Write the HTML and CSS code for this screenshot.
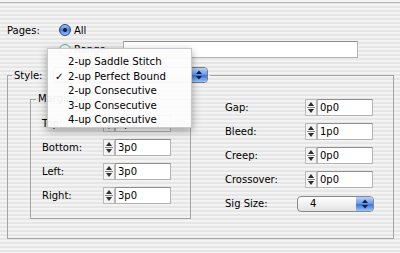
FILE: index.html
```html
<!DOCTYPE html>
<html lang="en">
<head>
    <meta charset="UTF-8">
    <title>Booklet Setup</title>
    <link rel="stylesheet" href="styles.css">
</head>
<body>

    <div class="dialog">

        <!-- Pages -->
        <div class="pages-row">
            <span class="pages-label">Pages:</span>
            <label class="radio">
                <svg class="radio-icon" width="12" height="12" viewBox="0 0 12 12">
                    <defs>
                        <linearGradient id="blueRadio" x1="0" y1="0" x2="0" y2="1">
                            <stop offset="0" stop-color="#a9c8f2"/>
                            <stop offset="0.5" stop-color="#4b82da"/>
                            <stop offset="1" stop-color="#9cc3f5"/>
                        </linearGradient>
                    </defs>
                    <circle cx="6" cy="6" r="5.5" fill="url(#blueRadio)" stroke="#27479a"/>
                    <circle cx="6" cy="6" r="2" fill="#0c1a3d"/>
                </svg>
                All
            </label>
        </div>

        <div class="range-row">
            <label class="radio range-radio">
                <svg class="radio-icon" width="12" height="12" viewBox="0 0 12 12">
                    <defs>
                        <linearGradient id="greyRadio" x1="0" y1="0" x2="0" y2="1">
                            <stop offset="0" stop-color="#e2f4ee"/>
                            <stop offset="1" stop-color="#ffffff"/>
                        </linearGradient>
                    </defs>
                    <circle cx="6" cy="6" r="5.5" fill="url(#greyRadio)" stroke="#5fa58f"/>
                </svg>
                Range:
            </label>
            <span class="field range-field"></span>
        </div>

        <!-- Style group -->
        <fieldset class="style-group">
            <legend class="style-legend">
                <span>Style:</span>
                <span class="style-popup">
                    <span class="popup-arrows">
                        <svg width="8" height="12" viewBox="0 0 8 12">
                            <polygon points="4,1.5 7,5 1,5" fill="#0d1f4a"/>
                            <polygon points="1,7 7,7 4,10.5" fill="#0d1f4a"/>
                        </svg>
                    </span>
                </span>
            </legend>

            <div class="style-body">

                <fieldset class="margins">
                    <legend class="margins-legend">Margins</legend>
                    <div class="field-list margin-rows">
                        <div class="field-row">
                            <span class="field-label left-label">Top:</span>
                            <svg class="stepper" width="12" height="17" viewBox="0 0 12 17">
                                <rect x="0.5" y="0.5" width="11" height="16" fill="#f3f3f3" stroke="#b9b9b9"/>
                                <polygon points="6,3 9,7 3,7" fill="#2f2f2f"/>
                                <line x1="2" y1="8.5" x2="10" y2="8.5" stroke="#8a8a8a"/>
                                <polygon points="3,10 9,10 6,14" fill="#2f2f2f"/>
                            </svg>
                            <span class="field value-field">3p0</span>
                        </div>
                        <div class="field-row">
                            <span class="field-label left-label">Bottom:</span>
                            <svg class="stepper" width="12" height="17" viewBox="0 0 12 17">
                                <rect x="0.5" y="0.5" width="11" height="16" fill="#f3f3f3" stroke="#b9b9b9"/>
                                <polygon points="6,3 9,7 3,7" fill="#2f2f2f"/>
                                <line x1="2" y1="8.5" x2="10" y2="8.5" stroke="#8a8a8a"/>
                                <polygon points="3,10 9,10 6,14" fill="#2f2f2f"/>
                            </svg>
                            <span class="field value-field">3p0</span>
                        </div>
                        <div class="field-row">
                            <span class="field-label left-label">Left:</span>
                            <svg class="stepper" width="12" height="17" viewBox="0 0 12 17">
                                <rect x="0.5" y="0.5" width="11" height="16" fill="#f3f3f3" stroke="#b9b9b9"/>
                                <polygon points="6,3 9,7 3,7" fill="#2f2f2f"/>
                                <line x1="2" y1="8.5" x2="10" y2="8.5" stroke="#8a8a8a"/>
                                <polygon points="3,10 9,10 6,14" fill="#2f2f2f"/>
                            </svg>
                            <span class="field value-field">3p0</span>
                        </div>
                        <div class="field-row">
                            <span class="field-label left-label">Right:</span>
                            <svg class="stepper" width="12" height="17" viewBox="0 0 12 17">
                                <rect x="0.5" y="0.5" width="11" height="16" fill="#f3f3f3" stroke="#b9b9b9"/>
                                <polygon points="6,3 9,7 3,7" fill="#2f2f2f"/>
                                <line x1="2" y1="8.5" x2="10" y2="8.5" stroke="#8a8a8a"/>
                                <polygon points="3,10 9,10 6,14" fill="#2f2f2f"/>
                            </svg>
                            <span class="field value-field">3p0</span>
                        </div>
                    </div>
                </fieldset>

                <div class="field-list right-col">
                    <div class="field-row">
                        <span class="field-label right-label">Gap:</span>
                        <svg class="stepper" width="12" height="17" viewBox="0 0 12 17">
                            <rect x="0.5" y="0.5" width="11" height="16" fill="#f3f3f3" stroke="#b9b9b9"/>
                            <polygon points="6,3 9,7 3,7" fill="#2f2f2f"/>
                            <line x1="2" y1="8.5" x2="10" y2="8.5" stroke="#8a8a8a"/>
                            <polygon points="3,10 9,10 6,14" fill="#2f2f2f"/>
                        </svg>
                        <span class="field value-field">0p0</span>
                    </div>
                    <div class="field-row">
                        <span class="field-label right-label">Bleed:</span>
                        <svg class="stepper" width="12" height="17" viewBox="0 0 12 17">
                            <rect x="0.5" y="0.5" width="11" height="16" fill="#f3f3f3" stroke="#b9b9b9"/>
                            <polygon points="6,3 9,7 3,7" fill="#2f2f2f"/>
                            <line x1="2" y1="8.5" x2="10" y2="8.5" stroke="#8a8a8a"/>
                            <polygon points="3,10 9,10 6,14" fill="#2f2f2f"/>
                        </svg>
                        <span class="field value-field">1p0</span>
                    </div>
                    <div class="field-row">
                        <span class="field-label right-label">Creep:</span>
                        <svg class="stepper" width="12" height="17" viewBox="0 0 12 17">
                            <rect x="0.5" y="0.5" width="11" height="16" fill="#f3f3f3" stroke="#b9b9b9"/>
                            <polygon points="6,3 9,7 3,7" fill="#2f2f2f"/>
                            <line x1="2" y1="8.5" x2="10" y2="8.5" stroke="#8a8a8a"/>
                            <polygon points="3,10 9,10 6,14" fill="#2f2f2f"/>
                        </svg>
                        <span class="field value-field">0p0</span>
                    </div>
                    <div class="field-row">
                        <span class="field-label right-label">Crossover:</span>
                        <svg class="stepper" width="12" height="17" viewBox="0 0 12 17">
                            <rect x="0.5" y="0.5" width="11" height="16" fill="#f3f3f3" stroke="#b9b9b9"/>
                            <polygon points="6,3 9,7 3,7" fill="#2f2f2f"/>
                            <line x1="2" y1="8.5" x2="10" y2="8.5" stroke="#8a8a8a"/>
                            <polygon points="3,10 9,10 6,14" fill="#2f2f2f"/>
                        </svg>
                        <span class="field value-field">0p0</span>
                    </div>
                    <div class="field-row">
                        <span class="field-label sig-label">Sig Size:</span>
                        <span class="sig-popup">
                            <span class="sig-value">4</span>
                            <span class="popup-arrows">
                                <svg width="8" height="12" viewBox="0 0 8 12">
                                    <polygon points="4,1.5 7,5 1,5" fill="#0d1f4a"/>
                                    <polygon points="1,7 7,7 4,10.5" fill="#0d1f4a"/>
                                </svg>
                            </span>
                        </span>
                    </div>
                </div>

            </div>
        </fieldset>

    </div>

    <!-- Open Style menu -->
    <div class="menu">
        <div class="menu-item"><span class="check"></span>2-up Saddle Stitch</div>
        <div class="menu-item"><span class="check">&#10003;</span>2-up Perfect Bound</div>
        <div class="menu-item"><span class="check"></span>2-up Consecutive</div>
        <div class="menu-item"><span class="check"></span>3-up Consecutive</div>
        <div class="menu-item"><span class="check"></span>4-up Consecutive</div>
    </div>

</body>
</html>
```

FILE: styles.css
```css
/* General Body Styling */
body {
    margin: 0;
    font-family: 'DejaVu Sans', sans-serif;
    font-size: 10px;
    color: #000;
    background: repeating-linear-gradient(to bottom, #f3f3f3 0px, #f3f3f3 2px, #e6e6e6 2px, #e6e6e6 4px);
    height: 253px;
    overflow: hidden;
}

.dialog {
    margin-top: 2px;
    border-top: 1px solid #b8b8b8;
    padding-top: 19px;
}

/* Pages radios */
.pages-row {
    display: flex;
    align-items: center;
    height: 16px;
    padding-left: 7px;
}

.pages-label {
    width: 52px;
}

.radio {
    display: flex;
    align-items: center;
}

.radio-icon {
    margin-right: 3px;
}

.range-row {
    display: flex;
    align-items: center;
    height: 17px;
    margin-top: 3px;
    padding-left: 59px;
}

.range-radio {
    width: 64px;
}

/* Text fields */
.field {
    display: flex;
    align-items: center;
    box-sizing: border-box;
    height: 17px;
    background: #fff;
    border: 1px solid #b4b4b4;
    border-top-color: #8c8c8c;
    padding-left: 2px;
}

.range-field {
    width: 235px;
}

/* Style group box */
.style-group {
    margin: 9px 6px 0 7px;
    border: 1px solid #a4a4a4;
    padding: 10px 0 19px 4px;
    min-width: 0;
}

.style-legend {
    display: flex;
    align-items: center;
    padding: 0 2px;
    height: 16px;
}

.style-popup {
    display: flex;
    justify-content: flex-end;
    box-sizing: border-box;
    width: 155px;
    height: 16px;
    margin-left: 10px;
    border: 1px solid #7b7b7b;
    border-radius: 4px;
    background: linear-gradient(#ffffff, #e4e4e4);
}

.popup-arrows {
    display: flex;
    align-items: center;
    justify-content: center;
    width: 15px;
    border-radius: 0 3px 3px 0;
    background: linear-gradient(#b7d2f6 0%, #6d9de6 45%, #3c74d6 55%, #9cc6f7 100%);
}

.style-body {
    display: flex;
    align-items: flex-start;
    padding-left: 18px;
}

/* Margins group */
.margins {
    box-sizing: border-box;
    width: 161px;
    margin: 0;
    border: 1px solid #a4a4a4;
    padding: 0 8px 14px 5px;
    min-width: 0;
}

.margins-legend {
    padding: 0 2px;
    line-height: 12px;
}

.field-list {
    display: flex;
    flex-direction: column;
    gap: 7px;
}

.margin-rows {
    padding: 10px 0 0 6px;
}

.field-row {
    display: flex;
    align-items: center;
    height: 17px;
}

.left-label {
    width: 61px;
}

.right-label {
    width: 80px;
}

.sig-label {
    width: 72px;
}

.stepper {
    flex: none;
}

.value-field {
    width: 56px;
}

/* Right column */
.right-col {
    margin-left: 34px;
    padding-top: 6px;
}

.sig-popup {
    display: flex;
    box-sizing: border-box;
    width: 77px;
    height: 16px;
    border: 1px solid #8a8a8a;
    border-radius: 4px;
    background: linear-gradient(#ffffff, #e2e2e2);
}

.sig-value {
    flex: 1;
    padding-left: 12px;
    line-height: 14px;
}

.sig-popup .popup-arrows {
    width: 17px;
}

/* Popup menu */
.menu {
    position: absolute;
    top: 48px;
    left: 47px;
    width: 145px;
    height: 80px;
    box-sizing: border-box;
    padding-top: 6px;
    background: rgba(252, 252, 252, 0.95);
    box-shadow: 0 3px 8px rgba(0, 0, 0, 0.35);
    border: 1px solid #c8c8c8;
}

.menu-item {
    display: flex;
    line-height: 14.5px;
    font-size: 10.2px;
}

.check {
    width: 13px;
    margin-left: 7px;
    font-weight: bold;
}
```
